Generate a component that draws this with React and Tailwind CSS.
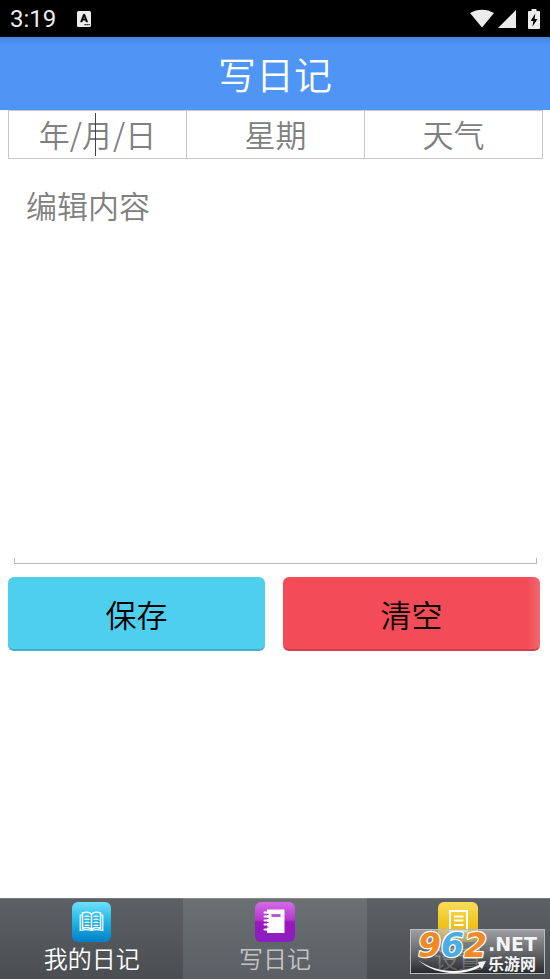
import React from "react";

const FONT = "font-['Noto_Sans_CJK_SC','Noto_Sans',sans-serif] font-[350]";

function StatusBar() {
  return (
    <div className="flex h-[37px] items-center bg-black px-2.5 font-[Roboto,sans-serif] text-[#ececec]">
      <span className="text-2xl leading-7 font-normal">3:19</span>
      <svg className="ml-5 h-4 w-4" viewBox="0 0 16 16" aria-hidden="true">
        <rect x="1" y="0" width="14" height="16" rx="1.5" fill="#ececec" />
        <path d="M4.4 11 7.3 3.2h1.600L11.8 11H10l-.6-1.700H6.800L6.2 11zM7.300 7.900h1.600L8.100 5.400z" fill="#000" stroke="#000" strokeWidth=".4" />
        <path d="M8.500 13h1.300v1.200H8.500zM10.500 13h1.300v1.200h-1.300zM12.500 13h1.200v1.200h-1.200z" fill="#000" />
      </svg>
      <div className="ml-auto flex items-center">
        <svg className="h-5 w-6" viewBox="0 0 24 20" aria-hidden="true">
          <path d="M12 18.500 0 4C7-.5 17-.5 24 4z" fill="#ececec" />
        </svg>
        <svg className="ml-1 h-[18px] w-[18px]" viewBox="0 0 18 18" aria-hidden="true">
          <path d="M18 0v18H0z" fill="#ececec" />
        </svg>
        <svg className="ml-3 h-5 w-3" viewBox="0 0 12 20" aria-hidden="true">
          <path d="M3.500 0h5v2H11a1 1 0 0 1 1 1v16a1 1 0 0 1-1 1H1a1 1 0 0 1-1-1V3a1 1 0 0 1 1-1h2.500z" fill="#ececec" />
          <path d="M7.300 4.500 2.600 12h2.700l-.8 5.500L9.500 10H6.600z" fill="#000" />
        </svg>
      </div>
    </div>
  );
}

function MetaField({ label, caret }) {
  return (
    <div className="relative flex-1 border-r border-[#c8c8c8]">
      <input
        type="text"
        aria-label={label}
        placeholder={label}
        className="block h-[47px] w-full bg-transparent pb-0.5 text-center text-[31px] text-[#808080] outline-none placeholder:text-[#808080]"
      />
      {caret && <span className="absolute top-0.5 left-[86px] h-[43px] w-px bg-[#444]" />}
    </div>
  );
}

function BookIcon() {
  return (
    <svg className="h-10 w-10" viewBox="0 0 40 40" aria-hidden="true">
      <defs>
        <linearGradient id="blue" x1="0" y1="0" x2="0" y2="1">
          <stop offset="0" stopColor="#6fe0fa" />
          <stop offset=".4" stopColor="#2cbdea" />
          <stop offset="1" stopColor="#0080c6" />
        </linearGradient>
      </defs>
      <rect width="39" height="40" rx="6" fill="url(#blue)" />
      <g fill="none" stroke="#fff">
        <path strokeWidth="1.500" d="M19.500 12c-2-2-6-2.300-9-1v15.500c3-1.200 7-1 9 1 2-2 6-2.200 9-1V11c-3-1.300-7-1-9 1zv15.500" />
        <path strokeWidth="1.200" d="M10 13H8.200v15.500c4-1.200 8.500-1 11.300 0 2.800-1 7.300-1.200 11.300 0V13H29" />
        <path strokeWidth="1.200" d="M12.500 14.500q2.500-.8 5 0M12.500 17.500q2.500-.8 5 0M12.500 20.500q2.500-.8 5 0M12.500 23.500q2.500-.8 5 0M21.500 14.500q2.500-.8 5 0M21.500 17.500q2.500-.8 5 0M21.500 20.500q2.500-.8 5 0M21.500 23.500q2.500-.8 5 0" />
      </g>
    </svg>
  );
}

function NotebookIcon() {
  return (
    <svg className="h-10 w-10" viewBox="0 0 40 40" aria-hidden="true">
      <defs>
        <linearGradient id="purple" x1="0" y1="0" x2="0" y2="1">
          <stop offset="0" stopColor="#d46be6" />
          <stop offset=".45" stopColor="#b337cf" />
          <stop offset=".5" stopColor="#9a17bd" />
          <stop offset="1" stopColor="#8a1fc0" />
        </linearGradient>
      </defs>
      <rect width="40" height="40" rx="6" fill="url(#purple)" />
      <path d="M12 7.500h17.500V31H12z" fill="#fff" />
      <path d="M9.500 10.500H13M9.500 14.500H13M9.500 18.500H13M9.500 22.500H13M9.500 27.500H13" stroke="#fff" strokeWidth="2" strokeLinecap="round" />
      <path d="M12 12.500h1.500M12 16.500h1.500M12 20.500h1.500M12 25h1.500" stroke="#9a17bd" strokeWidth="1.200" />
      <path d="M16.500 12h9v3h-9z" fill="#b75bd0" />
    </svg>
  );
}

function PageIcon() {
  return (
    <svg className="h-10 w-10" viewBox="0 0 40 40" aria-hidden="true">
      <defs>
        <linearGradient id="yellow" x1="0" y1="0" x2="0" y2="1">
          <stop offset="0" stopColor="#f9dc5c" />
          <stop offset=".45" stopColor="#f1c925" />
          <stop offset="1" stopColor="#e9ae00" />
        </linearGradient>
      </defs>
      <rect width="40" height="40" rx="6" fill="url(#yellow)" />
      <path d="M12 9h17v20H12z" fill="none" stroke="#fff" strokeWidth="2" />
      <path d="M16 14.500h9.500M16 18.500h9.500M16 23h9.500" stroke="#fff" strokeWidth="1.800" />
    </svg>
  );
}

function Tab({ label, icon, active }) {
  return (
    <button
      type="button"
      aria-current={active ? "page" : undefined}
      className={
        active
          ? "flex flex-1 flex-col items-center border-t border-[#878b8e] bg-linear-to-b from-[#6b7073] to-[#5a5f65] pt-[3px] text-[#c4c4c4]"
          : "flex flex-1 flex-col items-center border-t border-[#777a7d] bg-linear-to-b from-[#5d6165] to-[#4a4d51] pt-[3px] text-white"
      }
    >
      {icon}
      <span className="text-2xl leading-8">{label}</span>
    </button>
  );
}

function SiteBadge() {
  return (
    <svg
      className="absolute right-[5px] bottom-[5px] h-[45px] w-[135px]"
      viewBox="0 0 135 45"
      role="img"
      aria-label="962.NET 乐游网"
    >
      <defs>
        <linearGradient id="plate" x1="0" y1="0" x2="0" y2="1">
          <stop offset="0" stopColor="#c4c6c8" stopOpacity=".65" />
          <stop offset=".5" stopColor="#707274" stopOpacity=".7" />
          <stop offset="1" stopColor="#1c1d20" stopOpacity=".8" />
        </linearGradient>
      </defs>
      <rect x=".5" y=".5" width="134" height="44" fill="url(#plate)" stroke="#b9bbbd" />
      <path d="M8 31C26 44 52 45 69 36l-1-3 8-1-4 8-2-2C52 48 24 46 8 31z" fill="#f4f4f4" />
      <text
        x="8"
        y="28"
        fontFamily="DejaVu Sans, sans-serif"
        fontWeight="700"
        fontStyle="italic"
        fontSize="33"
        stroke="#fff"
        strokeWidth="2.500"
        paintOrder="stroke"
        strokeLinejoin="round"
      >
        <tspan fill="#f08a24">9</tspan>
        <tspan fill="#4aaee4">6</tspan>
        <tspan fill="#f08a24">2</tspan>
      </text>
      <text x="78" y="22" fill="#f4f4f4" fontFamily="DejaVu Sans, sans-serif" fontWeight="700" fontSize="19">.NET</text>
      <text x="78" y="41" fill="#f4f4f4" fontFamily="Noto Sans CJK SC, sans-serif" fontWeight="700" fontSize="16">乐游网</text>
    </svg>
  );
}

export default function App() {
  return (
    <div className={`relative flex min-h-screen flex-col bg-white ${FONT}`}>
      <StatusBar />
      <header className="flex h-[73px] items-center justify-center bg-linear-to-b from-[#4585dc] from-0% via-[#4e95f6] via-10% to-[#4e95f6] pb-0.5">
        <h1 className="text-[38px] leading-[56px] font-[350] text-white">写日记</h1>
      </header>

      <main className="flex flex-col pr-[7px] pl-2">
        <div className="flex border-y border-l border-[#c8c8c8]">
          <MetaField label="年/月/日" caret />
          <MetaField label="星期" />
          <MetaField label="天气" />
        </div>
        <div className="px-1.5">
          <textarea
            aria-label="编辑内容"
            placeholder="编辑内容"
            className="block h-[399px] w-full resize-none bg-white px-3 pt-[23px] text-[31px] leading-[46px] text-[#808080] outline-none placeholder:text-[#808080]"
          />
          <div className="h-1.5 border-x border-b border-[#b8b8b8]" />
        </div>
        <div className="mt-[13px] flex gap-[18px] pr-[3px]">
          <button
            type="button"
            className="h-[74px] flex-1 rounded-md border-b-2 border-[#45aec9] bg-[#4ecfee] pt-0.5 text-[31px] text-black"
          >
            保存
          </button>
          <button
            type="button"
            className="h-[74px] flex-1 rounded-md border-b-2 border-[#d2424e] bg-linear-to-r from-[#f34b57] from-95% to-[#f0686f] pt-0.5 text-[31px] text-black"
          >
            清空
          </button>
        </div>
      </main>

      <nav className="mt-auto flex h-[81px]">
        <Tab label="我的日记" icon={<BookIcon />} />
        <Tab label="写日记" icon={<NotebookIcon />} active />
        <Tab label="设置" icon={<PageIcon />} />
      </nav>
      <SiteBadge />
    </div>
  );
}
